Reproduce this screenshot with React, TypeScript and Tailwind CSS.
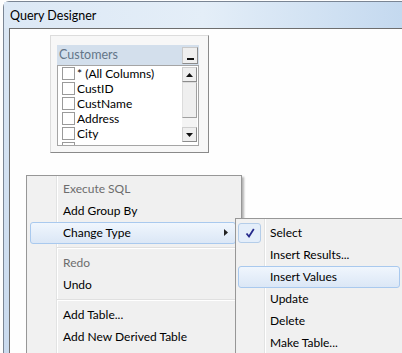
import React from "react";

const font = { fontFamily: "Lato, 'Open Sans', 'Liberation Sans', sans-serif" };

function Check() {
  return <div className="w-[13px] h-[13px] border border-[#9a9a9a] bg-white mb-[2px]" />;
}

function TableBox() {
  const cols = ["* (All Columns)", "CustID", "CustName", "Address", "City", ""];
  return (
    <div className="ml-[40px] mt-[6px] w-[159px] h-[118px] border border-[#dcdcdc] border-r-[#8a8a8a] border-b-[#8a8a8a] bg-[#f7f7f7] pt-[9px] pl-[6px] pr-[9px]">
      <div className="flex h-[20px] bg-[#d3dfec] items-center">
        <span className="pl-[2px] text-[12.5px] text-[#637588] flex-1">Customers</span>
        <div className="w-[16px] h-[17px] mr-[1px] bg-[#efefef] border border-[#c8c8c8] border-r-[#8c8c8c] border-b-[#8c8c8c] flex items-end justify-center pb-[3px]">
          <div className="w-[7px] h-[2px] bg-[#111]" />
        </div>
      </div>
      <div className="h-[81px] bg-white border border-[#a5a5a5] flex overflow-hidden">
        <div className="flex-1 pt-[1px] pl-[4px]">
          {cols.map((c, i) => (
            <div key={i} className="flex h-[15px] items-start">
              <Check />
              <span className="ml-[2px] text-[12px] leading-[14px] text-black">{c}</span>
            </div>
          ))}
        </div>
        <div className="w-[15px] mr-[1px] pt-[1px] flex flex-col">
          <div className="h-[15px] bg-[#efefef] border border-[#cfcfcf] border-r-[#8c8c8c] border-b-[#8c8c8c] flex items-center justify-center">
            <svg width="7" height="4" viewBox="0 0 7 4"><path d="M3.5 0 L7 4 L0 4Z" fill="#111" /></svg>
          </div>
          <div className="h-[36px] bg-[#efefef] border border-[#dcdcdc] border-r-[#a0a0a0] border-b-[#a0a0a0]" />
          <div className="h-[9px] bg-[#f4f4f4]" />
          <div className="h-[15px] bg-[#efefef] border border-[#cfcfcf] border-r-[#8c8c8c] border-b-[#8c8c8c] flex items-center justify-center">
            <svg width="7" height="4" viewBox="0 0 7 4"><path d="M0 0 L7 0 L3.5 4Z" fill="#111" /></svg>
          </div>
        </div>
      </div>
    </div>
  );
}

function Item({ label, disabled }: { label: string; disabled?: boolean }) {
  return (
    <div className="relative h-[22px] flex items-center">
      <span className={`relative text-[12px] ${disabled ? "text-[#6d6d6d]" : "text-black"}`}>{label}</span>
    </div>
  );
}

function Sep() {
  return (
    <div className="h-[8px] flex flex-col justify-center ml-[-6px] mr-[3px]">
      <div className="h-[1px] bg-[#e0e0e0]" />
      <div className="h-[1px] bg-white" />
    </div>
  );
}

export default function App() {
  return (
    <div className="relative w-[402px] h-[353px] overflow-hidden bg-[#fdfdfd]" style={font}>
      <div className="ml-[3px] mt-[1px] h-[360px] border-l border-t border-[#7a8594] rounded-tl-[6px] bg-gradient-to-b from-[#dbe7f4] to-[#c9daee] flex flex-col">
        <div className="h-[26px] flex items-center pl-[6px] pt-[2px] bg-gradient-to-r from-[#dce8f5] via-[#e4eef8] to-[#c4d9ef]">
          <span className="text-[12.5px] text-black">Query Designer</span>
        </div>
        <div className="ml-[5px] flex-1 border-l border-t border-[#6e6e6e] bg-[#fefefe]">
          <TableBox />
        </div>
      </div>

      <div className="absolute left-[26px] top-[175px] w-[216px] h-[200px] border border-[#979797] bg-[#f0f0f0] shadow-[2px_2px_2px_rgba(0,0,0,0.3)] pt-[2px]">
        <div className="absolute left-[1px] top-0 bottom-0 w-[28px] bg-[#f1f1f1]" />
        <div className="absolute left-[29px] top-0 bottom-0 w-[1px] bg-[#e2e3e3]" />
        <div className="absolute left-[30px] top-0 bottom-0 w-[1px] bg-white" />
        <div className="relative pl-[36px]">
          <Item label="Execute SQL" disabled />
          <Item label="Add Group By" />
          <div className="ml-[-36px]">
            <div className="relative h-[22px] flex items-center">
              <div className="absolute left-[3px] right-[5px] top-0 bottom-0 rounded-[3px] border border-[#a9c9ee] bg-gradient-to-b from-[#f0f6fd] to-[#dbe7f6]" />
              <span className="relative pl-[36px] text-[12px] text-black">Change Type</span>
              <svg className="absolute right-[13px] top-[7px]" width="4" height="7" viewBox="0 0 4 7"><path d="M0 0 L4 3.5 L0 7Z" fill="#222" /></svg>
            </div>
          </div>
          <Sep />
          <Item label="Redo" disabled />
          <Item label="Undo" />
          <Sep />
          <Item label="Add Table..." />
          <Item label="Add New Derived Table" />
        </div>
      </div>

      <div className="absolute left-[235px] top-[218px] w-[180px] h-[150px] border border-[#979797] bg-[#f0f0f0] pt-[3px]">
        <div className="absolute left-[1px] top-0 bottom-0 w-[27px] bg-[#f1f1f1]" />
        <div className="absolute left-[28px] top-0 bottom-0 w-[1px] bg-[#e2e3e3]" />
        <div className="absolute left-[29px] top-0 bottom-0 w-[1px] bg-white" />
        <div className="relative">
          {[
            { l: "Select", c: true },
            { l: "Insert Results..." },
            { l: "Insert Values", h: true },
            { l: "Update" },
            { l: "Delete" },
            { l: "Make Table..." },
          ].map((it) => (
            <div key={it.l} className="relative h-[22px] flex items-center">
              {it.h && (
                <div className="absolute left-[2px] w-[162px] top-0 bottom-0 rounded-[3px] border border-[#a9c9ee] bg-gradient-to-b from-[#f0f6fd] to-[#dbe7f6]" />
              )}
              {it.c && (
                <div className="absolute left-[2px] top-[1px] w-[23px] h-[20px] rounded-[3px] border border-[#b4cde9] bg-[#e4eefa] flex items-center justify-center">
                  <svg width="10" height="10" viewBox="0 0 10 10"><path d="M1.5 5.5 L4 8.5 L8.8 1" stroke="#262a8c" strokeWidth="1.8" fill="none" /></svg>
                </div>
              )}
              <span className="relative pl-[34px] text-[12px] text-black">{it.l}</span>
            </div>
          ))}
        </div>
      </div>
    </div>
  );
}
